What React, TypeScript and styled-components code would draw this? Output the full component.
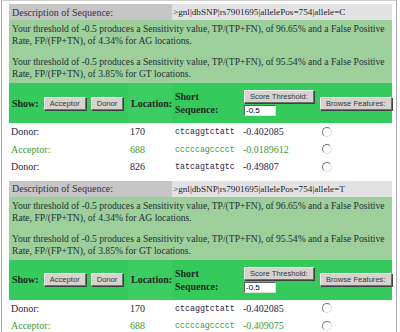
import styled, { createGlobalStyle } from "styled-components";

const Global = createGlobalStyle`
    html, body {
        margin: 0;
        padding: 0;
        background: #ffffff;
    }
    body {
        font-family: "Liberation Serif", "Times New Roman", serif;
    }
`;

const Frame = styled.div`
    width: 396px;
    height: 332px;
    box-sizing: border-box;
    margin-left: 1px;
    border-left: 1px solid #a8a8a8;
    border-right: 1px solid #a8a8a8;
    border-top: 1px solid #d0d0d0;
    padding: 3px 4px 0 7px;
    overflow: hidden;
    display: flex;
    flex-direction: column;
    gap: 5px;
`;

const Block = styled.div`
    display: grid;
    grid-template-columns: 119px 44px 69px 76px 75px;
    font-size: 10px;
    color: #1a1a40;
`;

const HeadLabel = styled.div`
    grid-column: 1 / 3;
    background: #c6c6c6;
    height: 16px;
    display: flex;
    align-items: center;
    padding-left: 3px;
    color: #333344;
`;

const HeadValue = styled.div`
    grid-column: 3 / 6;
    background: #e2e2e2;
    height: 16px;
    display: flex;
    align-items: center;
    padding-left: 1px;
    color: #222230;
    font-size: 9.2px;
    white-space: nowrap;
`;

const Summary = styled.div`
    grid-column: 1 / 6;
    background: #9ccf99;
    padding: 3px 3px;
    height: 63px;
    box-sizing: border-box;
    color: #26303a;
    font-size: 9.6px;
    line-height: 12px;
    white-space: nowrap;
`;

const Para = styled.p`
    margin: 0 0 9px 0;
    &:last-child {
        margin-bottom: 0;
    }
`;

const ShowCell = styled.div<{ $tone?: string }>`
    background: ${(p) => p.$tone ?? "#35cb5c"};
    height: 40px;
    display: flex;
    align-items: center;
    gap: 5px;
    padding-left: 3px;
    box-sizing: border-box;
    font-weight: bold;
    color: #1c2a24;
    font-size: 10px;
`;

const StackCell = styled(ShowCell)`
    flex-direction: column;
    align-items: flex-start;
    justify-content: center;
    gap: 2px;
    font-weight: normal;
`;

const Label = styled.span`
    font-weight: bold;
`;

const ClassicButton = styled.button`
    font-family: "Liberation Sans", Arial, sans-serif;
    font-size: 7.6px;
    color: #333;
    background: #d6d3ce;
    border: 1px solid;
    border-color: #ffffff #707070 #707070 #ffffff;
    box-shadow: 1px 1px 0 #404040;
    height: 13px;
    padding: 0 5px;
    line-height: 11px;
    font-weight: normal;
    white-space: nowrap;
`;

const Input = styled.input`
    width: 32px;
    height: 11px;
    box-sizing: border-box;
    font-size: 8px;
    font-family: "Liberation Sans", Arial, sans-serif;
    border: 1px solid;
    border-color: #606060 #e0e0e0 #e0e0e0 #606060;
    padding: 0 1px;
    margin: 0;
`;

const Cell = styled.div<{ $green?: boolean; $mono?: boolean }>`
    height: 17.5px;
    display: flex;
    align-items: center;
    padding-left: ${(p) => (p.$mono ? "3px" : "2px")};
    color: ${(p) => (p.$green ? "#3a9a3a" : "#26264a")};
    font-family: ${(p) =>
        p.$mono ? '"Liberation Mono", "Courier New", monospace' : "inherit"};
    font-size: ${(p) => (p.$mono ? "8.3px" : "10px")};
    white-space: nowrap;
`;

const RadioCell = styled.div`
    height: 17.5px;
    display: flex;
    align-items: center;
    padding-left: 5px;
`;

const Radio = styled.span`
    width: 8px;
    height: 8px;
    border-radius: 50%;
    border: 1px solid;
    border-color: #777 #ddd #ddd #777;
    background: #fff;
`;

type Hit = { kind: string; loc: number; seq: string; score: string };

const blocks: { allele: string; rows: Hit[] }[] = [
    {
        allele: "C",
        rows: [
            { kind: "Donor", loc: 170, seq: "ctcaggtctatt", score: "-0.402085" },
            { kind: "Acceptor", loc: 688, seq: "cccccagcccct", score: "-0.0189612" },
            { kind: "Donor", loc: 826, seq: "tatcagtatgtc", score: "-0.49807" },
        ],
    },
    {
        allele: "T",
        rows: [
            { kind: "Donor", loc: 170, seq: "ctcaggtctatt", score: "-0.402085" },
            { kind: "Acceptor", loc: 688, seq: "cccccagcccct", score: "-0.409075" },
        ],
    },
];

const SequenceBlock = ({ allele, rows }: { allele: string; rows: Hit[] }) => (
    <Block>
        <HeadLabel>Description of Sequence:</HeadLabel>
        <HeadValue>&gt;gnl|dbSNP|rs7901695|allelePos=754|allele={allele}</HeadValue>
        <Summary>
            <Para>
                Your threshold of -0.5 produces a Sensitivity value, TP/(TP+FN), of 96.65% and a
                False Positive
                <br />
                Rate, FP/(FP+TN), of 4.34% for AG locations.
            </Para>
            <Para>
                Your threshold of -0.5 produces a Sensitivity value, TP/(TP+FN), of 95.54% and a
                False Positive
                <br />
                Rate, FP/(FP+TN), of 3.85% for GT locations.
            </Para>
        </Summary>
        <ShowCell>
            <Label>Show:</Label>
            <ClassicButton>Acceptor</ClassicButton>
            <ClassicButton>Donor</ClassicButton>
        </ShowCell>
        <ShowCell $tone="#3ccc62">
            <Label>Location:</Label>
        </ShowCell>
        <StackCell>
            <Label>Short</Label>
            <Label>Sequence:</Label>
        </StackCell>
        <StackCell>
            <ClassicButton>Score Threshold:</ClassicButton>
            <Input defaultValue="-0.5" />
        </StackCell>
        <ShowCell>
            <ClassicButton>Browse Features:</ClassicButton>
        </ShowCell>
        {rows.map((r, i) => {
            const green = r.kind === "Acceptor";
            return [
                <Cell key={`k${i}`} $green={green}>{r.kind}:</Cell>,
                <Cell key={`l${i}`} $green={green}>{r.loc}</Cell>,
                <Cell key={`s${i}`} $green={green} $mono>{r.seq}</Cell>,
                <Cell key={`v${i}`} $green={green}>{r.score}</Cell>,
                <RadioCell key={`r${i}`}>
                    <Radio />
                </RadioCell>,
            ];
        })}
    </Block>
);

export default function App() {
    return (
        <>
            <Global />
            <Frame>
                {blocks.map((b) => (
                    <SequenceBlock key={b.allele} allele={b.allele} rows={b.rows} />
                ))}
            </Frame>
        </>
    );
}
